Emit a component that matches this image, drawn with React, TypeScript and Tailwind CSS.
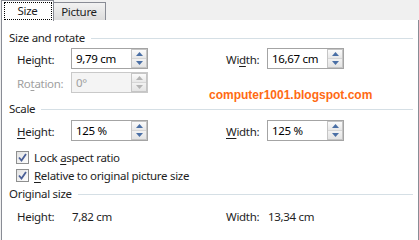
import React from "react";

const font = { fontFamily: '"Noto Sans", "Liberation Sans", sans-serif' };

function U({ children }: { children: React.ReactNode }) {
  return <span className="underline underline-offset-2">{children}</span>;
}

function Spinner({ disabled }: { disabled?: boolean }) {
  const arrow = disabled ? "#b4b4b4" : "#4a6fa5";
  return (
    <div className="flex flex-col w-[16px] h-[19px] border border-[#c5c5c5] bg-[#f4f4f4] ml-[1px]">
      <div className="flex-1 flex items-center justify-center border-b border-[#d6d6d6] bg-gradient-to-b from-[#fbfbfb] to-[#e8e8e8]">
        <svg width="7" height="4" viewBox="0 0 7 4">
          <path d="M0 4 L3.5 0 L7 4 Z" fill={arrow} />
        </svg>
      </div>
      <div className="flex-1 flex items-center justify-center bg-gradient-to-b from-[#f2f2f2] to-[#e4e4e4]">
        <svg width="7" height="4" viewBox="0 0 7 4">
          <path d="M0 0 L7 0 L3.5 4 Z" fill={arrow} />
        </svg>
      </div>
    </div>
  );
}

function Field({ value, disabled }: { value: string; disabled?: boolean }) {
  return (
    <div
      className={
        "flex items-center w-[77px] h-[21px] border " +
        (disabled ? "border-[#c9c9c9] bg-[#f4f4f4]" : "border-[#a4a4a4] bg-white")
      }
    >
      <div className={"flex-1 pl-[4px] pt-[1px] " + (disabled ? "text-[#a0a0a0]" : "text-[#000]")}>{value}</div>
      <Spinner disabled={disabled} />
    </div>
  );
}

function Section({ title }: { title: string }) {
  return (
    <div className="flex items-center gap-[6px] pl-[7px] pr-[5px] h-[16px]">
      <span className="text-[#1e1e1e] leading-none">{title}</span>
      <div className="flex-1 h-px bg-[#d5dfe5]" />
    </div>
  );
}

function Check({ children }: { children: React.ReactNode }) {
  return (
    <div className="flex items-center gap-[5px] pl-[14px] h-[18px]">
      <div className="w-[13px] h-[13px] border border-[#8e8f8f] bg-gradient-to-br from-[#e2e2e2] to-[#fefefe] flex items-center justify-center">
        <svg width="9" height="9" viewBox="0 0 9 9">
          <path d="M1 4.5 L3.5 7.5 L8 1" stroke="#4a5f97" strokeWidth="1.8" fill="none" />
        </svg>
      </div>
      <span className="text-[#1e1e1e] pt-[1px]">{children}</span>
    </div>
  );
}

export default function App() {
  return (
    <div
      className="w-[419px] h-[240px] bg-[#f0f0f0] flex flex-col overflow-hidden text-[11.5px] tracking-[-0.3px]"
      style={font}
    >
      <div className="flex items-end h-[21px] shrink-0">
        <div className="w-[1px]" />
        <div className="w-[53px] h-[21px] bg-white border-l border-t border-r border-[#898c95] flex items-start justify-center pt-[1px] relative z-10">
          <div className="w-[48px] h-[18px] border border-dotted border-black flex items-center justify-center text-[#1e1e1e]">
            Size
          </div>
        </div>
        <div className="w-[53px] h-[19px] border-t border-r border-b border-[#898c95] bg-gradient-to-b from-[#f2f2f2] to-[#dcdcdc] flex items-center justify-center text-[#1e1e1e] -ml-px">
          Picture
        </div>
        <div className="flex-1 h-[1px] bg-[#898c95]" />
      </div>
      <div className="flex-1 bg-white ml-[1px] border-l border-r border-[#898c95] -mt-px flex flex-col pt-[10px]">
        <Section title="Size and rotate" />
        <div className="flex items-center mt-[2px] h-[21px]">
          <div className="w-[69px] pl-[15px] pt-[2px] text-[#1e1e1e]">
            Hei<U>g</U>ht:
          </div>
          <Field value="9,79 cm" />
          <div className="w-[78px]" />
          <div className="w-[41px] pt-[2px] text-[#1e1e1e]">
            Wi<U>d</U>th:
          </div>
          <Field value="16,67 cm" />
        </div>
        <div className="flex items-start mt-[3px] h-[21px]">
          <div className="w-[69px] pl-[15px] pt-[2px] text-[#a0a0a0] h-[21px] flex items-center">
            Ro<U>t</U>ation:
          </div>
          <Field value="0°" disabled />
          <div
            className="ml-[61px] mt-[17px] text-[12px] font-bold text-[#ff6a13] leading-none tracking-normal"
            style={{ fontFamily: '"Liberation Sans", Arial, sans-serif' }}
          >
            computer1001.blogspot.com
          </div>
        </div>
        <div className="mt-[8px]">
          <Section title="Scale" />
        </div>
        <div className="flex items-center mt-[3px] h-[21px]">
          <div className="w-[69px] pl-[15px] pt-[2px] text-[#1e1e1e]">
            <U>H</U>eight:
          </div>
          <Field value="125 %" />
          <div className="w-[78px]" />
          <div className="w-[41px] pt-[2px] text-[#1e1e1e]">
            <U>W</U>idth:
          </div>
          <Field value="125 %" />
        </div>
        <div className="mt-[7px]">
          <Check>
            Lock <U>a</U>spect ratio
          </Check>
          <Check>
            <U>R</U>elative to original picture size
          </Check>
        </div>
        <div className="mt-[2px]">
          <Section title="Original size" />
        </div>
        <div className="flex items-center mt-[6px] h-[16px] pt-[1px] text-[#1e1e1e]">
          <div className="w-[70px] pl-[15px]">Height:</div>
          <div className="w-[154px]">7,82 cm</div>
          <div className="w-[42px]">Width:</div>
          <div>13,34 cm</div>
        </div>
      </div>
    </div>
  );
}
